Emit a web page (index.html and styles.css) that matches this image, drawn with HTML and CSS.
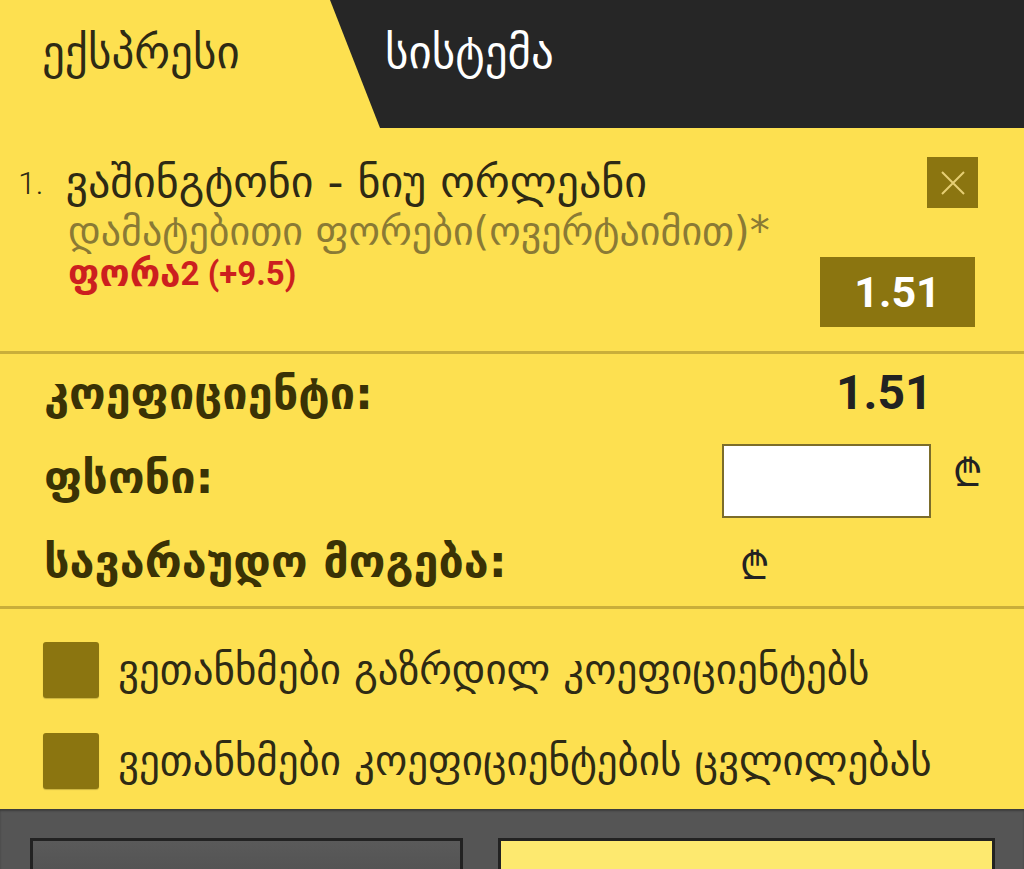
FILE: index.html
```html
<!DOCTYPE html>
<html lang="ka">
<head>
    <meta charset="UTF-8">
    <meta name="viewport" content="width=device-width, initial-scale=1.0">
    <title>ბილეთი</title>
    <link rel="stylesheet" href="styles.css">
</head>
<body>
    <div class="tabs">
        <div class="tab tab-active">ექსპრესი</div>
        <div class="tab tab-dark">სისტემა</div>
    </div>

    <div class="bet">
        <div class="bet-info">
            <div class="bet-title"><span class="num">1.</span>ვაშინგტონი - ნიუ ორლეანი</div>
            <div class="bet-market">დამატებითი ფორები(ოვერტაიმით)*</div>
            <div class="bet-pick">ფორა<span class="num">2 (+9.5)</span></div>
        </div>
        <div class="bet-side">
            <button class="close-btn" type="button">
                <svg width="26" height="26" viewBox="0 0 26 26"><path d="M2 2 L24 24 M24 2 L2 24" stroke="#e6cf74" stroke-width="2"/></svg>
            </button>
            <div class="odds-box">1.51</div>
        </div>
    </div>

    <div class="summary">
        <div class="row">
            <span class="label">კოეფიციენტი:</span>
            <span class="total">1.51</span>
        </div>
        <div class="row">
            <span class="label">ფსონი:</span>
            <span class="stake"><input type="text" class="stake-input"><span class="lari">₾</span></span>
        </div>
        <div class="row">
            <span class="label">სავარაუდო მოგება:</span>
            <span class="win"><span class="lari">₾</span></span>
        </div>
    </div>

    <div class="agree">
        <label class="check"><span class="box"></span>ვეთანხმები გაზრდილ კოეფიციენტებს</label>
        <label class="check"><span class="box"></span>ვეთანხმები კოეფიციენტების ცვლილებას</label>
    </div>

    <div class="footer">
        <button class="btn btn-dark" type="button"></button>
        <button class="btn btn-yellow" type="button"></button>
    </div>
</body>
</html>
```

FILE: styles.css
```css
body { margin: 0; background: #fde050; font-family: "DejaVu Sans", sans-serif; color: #3a3205; overflow: hidden; }
.num { font-family: Roboto, sans-serif; }

.tabs { display: flex; height: 128px; }
.tab { font-size: 45px; padding-top: 26px; box-sizing: border-box; }
.tab-active { width: 330px; padding-left: 42px; color: #2e2a14; }
.tab-dark { flex: 1; background: #262626; color: #fff; padding-left: 55px; clip-path: polygon(0 0, 100% 0, 100% 100%, 50px 100%); }

.bet { display: flex; justify-content: space-between; padding: 29px 46px 24px 18px; }
.bet-title { font-size: 44px; line-height: 50px; color: #2e2a14; white-space: nowrap; }
.bet-title .num { font-size: 32px; font-weight: 300; margin-right: 22px; vertical-align: 3px; }
.bet-market { font-size: 40px; line-height: 46px; color: #8a7a35; padding-left: 50px; white-space: nowrap; }
.bet-pick { font-size: 37px; line-height: 40px; color: #cc1f1f; font-weight: bold; padding-left: 50px; }
.bet-pick .num { font-size: 33px; vertical-align: 1px; }
.bet-side { display: flex; flex-direction: column; align-items: flex-end; }
.close-btn { width: 51px; height: 51px; background: #8b7510; border: none; padding: 0; display: flex; align-items: center; justify-content: center; }
.odds-box { margin-top: 49px; margin-right: 3px; width: 155px; height: 70px; background: #8b7510; color: #fff; font-family: Roboto, sans-serif; font-weight: bold; font-size: 43px; display: flex; align-items: center; justify-content: center; }

.summary { border-top: 3px solid #c9ae3a; padding: 0 0 0 44px; }
.row { display: flex; align-items: center; height: 84px; }
.label { font-weight: bold; font-size: 45px; width: 680px; color: #3a3205; white-space: nowrap; margin-top: -6px; }
.total { font-family: Roboto, sans-serif; font-weight: bold; font-size: 48px; color: #222; margin-left: 112px; margin-top: -8px; }
.stake { display: flex; align-items: center; margin-top: 2px; }
.stake-input { width: 209px; height: 74px; box-sizing: border-box; border: 2px solid #7c6d2a; background: #fff; margin: 0 0 0 -2px; }
.lari { font-family: "Noto Sans", "DejaVu Sans", sans-serif; font-size: 38px; color: #222; margin-left: 22px; margin-top: -20px; }
.win .lari { margin-left: 16px; margin-top: -40px; }

.agree { border-top: 3px solid #c9ae3a; padding: 33px 0 20px 43px; display: flex; flex-direction: column; gap: 35px; }
.check { display: flex; align-items: center; font-size: 41px; color: #2e2a14; white-space: nowrap; }
.box { width: 56px; height: 56px; background: #8b7510; border-radius: 3px; margin-right: 19px; box-shadow: 0 1px 1px rgba(0,0,0,0.2); flex: none; }

.footer { background: #555; height: 80px; display: flex; gap: 35px; padding: 29px 29px 0 30px; box-shadow: inset 0 2px 2px rgba(0,0,0,0.3); }
.btn { height: 60px; border: 3px solid #222; }
.btn-dark { width: 433px; background: linear-gradient(#5a5a5a, #4e4e4e); }
.btn-yellow { width: 497px; background: #fde96f; }
```
